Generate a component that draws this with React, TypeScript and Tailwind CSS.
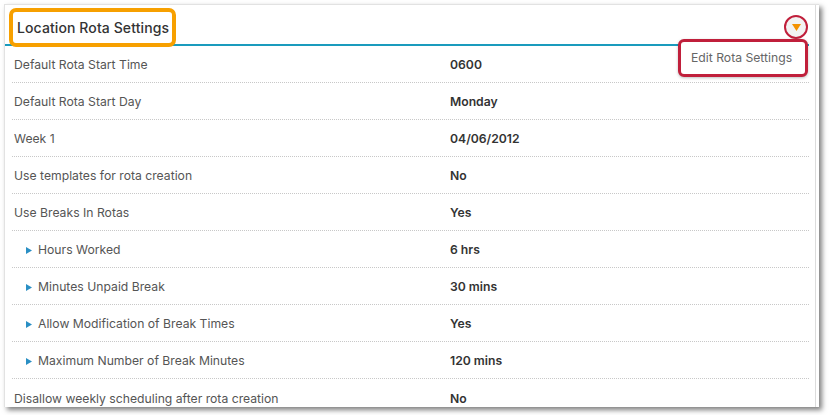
import React from "react";

interface Row {
  label: string;
  value: string;
  sub?: boolean;
}

const rows: Row[] = [
  { label: "Default Rota Start Time", value: "0600" },
  { label: "Default Rota Start Day", value: "Monday" },
  { label: "Week 1", value: "04/06/2012" },
  { label: "Use templates for rota creation", value: "No" },
  { label: "Use Breaks In Rotas", value: "Yes" },
  { label: "Hours Worked", value: "6 hrs", sub: true },
  { label: "Minutes Unpaid Break", value: "30 mins", sub: true },
  { label: "Allow Modification of Break Times", value: "Yes", sub: true },
  { label: "Maximum Number of Break Minutes", value: "120 mins", sub: true },
  { label: "Disallow weekly scheduling after rota creation", value: "No" },
];

export default function App() {
  return (
    <div className="w-[829px] h-[415px] bg-white pl-[4px] pt-[4px] font-[Inter] overflow-hidden">
      <div className="relative w-[815px] h-[403px] bg-white border-l border-t border-[#e2e2e2] shadow-[3px_3px_5px_rgba(0,0,0,0.5)] flex overflow-hidden">
        <div className="flex-1 flex flex-col">
          {/* header */}
          <div className="h-[41px] shrink-0 flex items-center pl-[12px] pt-[6px] mr-[6px] border-b-2 border-[#1a9bbd]">
            <h1 className="text-[14px] font-medium text-[#333] tracking-[0.1px]">Location Rota Settings</h1>
          </div>
          <div className="ml-[7px] mr-[6px]">
            {rows.map((r, i) => (
              <div
                key={i}
                className={`h-[37px] shrink-0 flex items-center pt-[3px] text-[12.2px] ${i < rows.length - 1 ? "border-b border-dotted border-[#c8c8c8]" : ""}`}
              >
                <div className={`w-[438px] flex items-center text-[#555] ${r.sub ? "pl-[14px]" : "pl-[2px]"}`}>
                  {r.sub && (
                    <svg width="6" height="7" viewBox="0 0 6 7" className="mr-[6px]">
                      <path d="M0 0 L6 3.5 L0 7 Z" fill="#2a8fc4" />
                    </svg>
                  )}
                  {r.label}
                </div>
                <div className="font-semibold text-[#333]">{r.value}</div>
              </div>
            ))}
          </div>
        </div>
        <div className="w-[4px] border-l border-[#dcdcdc] bg-white" />

        {/* title highlight */}
        <div className="absolute left-[4px] top-[3px] w-[167px] h-[39px] border-[4px] border-[#f7a000] rounded-[7px]" />

        {/* dropdown toggle */}
        <div className="absolute left-[779px] top-[10px] w-[24px] h-[24px] rounded-full border-2 border-[#c01f3b] bg-[#f2f2f2] flex items-center justify-center">
          <svg width="9" height="7" viewBox="0 0 9 7">
            <path d="M0 0 L9 0 L4.5 7 Z" fill="#f39200" />
          </svg>
        </div>

        {/* menu */}
        <div className="absolute left-[673px] top-[34px] w-[130px] h-[38px] border-[3px] border-[#c01f3b] rounded-[6px] bg-white shadow-[0_1px_3px_rgba(0,0,0,0.25)] flex items-center pl-[10px]">
          <span className="text-[12.2px] text-[#666]">Edit Rota Settings</span>
        </div>
      </div>
    </div>
  );
}
